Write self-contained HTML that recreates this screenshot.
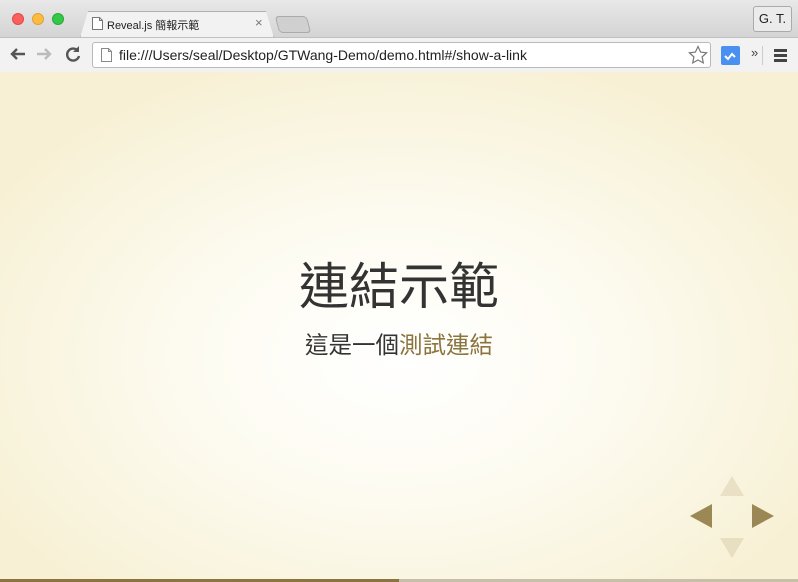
<!DOCTYPE html>
<html><head><meta charset="utf-8"><style>
*{margin:0;padding:0;box-sizing:border-box}
body{width:798px;height:582px;overflow:hidden;font-family:"Liberation Sans","Noto Sans CJK TC",sans-serif;position:relative;background:#fff}
.top{position:absolute;left:0;top:0;width:798px;height:72px;background:linear-gradient(#ececec,#dcdcdc);border-bottom:1px solid #b5b5b5}
.tabbar{position:absolute;top:0;left:0;width:798px;height:37px;background:linear-gradient(#e8e8e8,#d4d4d4)}
.dot{position:absolute;top:13px;width:12px;height:12px;border-radius:50%}
.tab{position:absolute;left:80px;top:11px;width:194px;height:27px;background:#f2f2f2;border:1px solid #b0b0b0;border-bottom:none;border-radius:5px 5px 0 0;clip-path:polygon(0 100%,8px 0,calc(100% - 8px) 0,100% 100%)}
.toolbar{position:absolute;top:37px;left:0;width:798px;height:35px;background:#f2f2f2;border-top:1px solid #c0c0c0}
.url{position:absolute;left:92px;top:4px;width:619px;height:26px;background:#fff;border:1px solid #b9b9b9;border-radius:3px;font-size:14px;color:#222;padding:4px 0 0 26px}
.slide{position:absolute;top:72px;left:0;width:798px;height:510px;background:radial-gradient(ellipse 60% 62% at 50% 56%,#fff 0%,#fdfbf0 45%,#f7f0d4 100%)}
h1{position:absolute;top:175px;width:100%;text-align:center;font-weight:400;font-size:50px;color:#333;font-family:"Liberation Sans","Noto Sans CJK TC",sans-serif}
p{position:absolute;top:254px;width:100%;text-align:center;font-size:23.5px;color:#333}
p span{color:#8b743d}
.bar{position:absolute;left:0;bottom:0;height:3px;width:798px;background:#c8bfa8}
.bar i{display:block;height:3px;width:399px;background:#8b743d}
</style></head><body>
<div class="top">
<div class="tabbar">
<div class="dot" style="left:12px;background:#fc605c;border:1px solid #de4a45"></div>
<div class="dot" style="left:32px;background:#fdbc40;border:1px solid #dea236"></div>
<div class="dot" style="left:52px;background:#34c84a;border:1px solid #27aa35"></div>
<div class="tab"></div>
<svg style="position:absolute;left:92px;top:17px" width="11" height="13"><path d="M.5.5h7l3 3v9H.5z M7.5.5v3h3" fill="#fff" stroke="#777"/></svg>
<div style="position:absolute;left:107px;top:17px;font-size:11px;color:#222">Reveal.js 簡報示範</div>
<div style="position:absolute;left:255px;top:15px;font-size:13px;color:#777">×</div>
<div style="position:absolute;left:277px;top:16px;width:32px;height:17px;background:#d0d0d0;border:1px solid #aaa;border-radius:4px;transform:skewX(15deg)"></div>
<div style="position:absolute;left:753px;top:6px;width:39px;height:26px;border:1px solid #aaa;border-radius:3px;background:#ebebeb;font-size:13px;text-align:center;line-height:24px;color:#222">G. T.</div>
</div>
<div class="toolbar">
<svg style="position:absolute;left:9px;top:8px" width="18" height="16"><path d="M16 8H3M8 3L3 8l5 5" stroke="#555" stroke-width="2.4" fill="none"/></svg>
<svg style="position:absolute;left:35px;top:8px" width="18" height="16"><path d="M2 8h13M10 3l5 5-5 5" stroke="#bbb" stroke-width="2.4" fill="none"/></svg>
<svg style="position:absolute;left:64px;top:7px" width="18" height="18"><path d="M14 6A6 6 0 1 0 15 11" stroke="#555" stroke-width="2.4" fill="none"/><path d="M15 1v6H9z" fill="#555"/></svg>
<div class="url">file:///Users/seal/Desktop/GTWang-Demo/demo.html#/show-a-link
<svg style="position:absolute;left:8px;top:5px" width="11" height="14"><path d="M.5.5h7l3 3v10H.5z M7.5.5v3h3" fill="#fff" stroke="#888"/></svg>
<svg style="position:absolute;right:2px;top:2px" width="20" height="20"><path d="M10 1.5l2.6 5.6 6 .7-4.5 4.1 1.2 6L10 15l-5.3 2.9 1.2-6L1.4 7.8l6-.7z" fill="none" stroke="#777" stroke-width="1.2"/></svg>
</div>
<div style="position:absolute;left:721px;top:8px;width:19px;height:19px;background:#4a90f0;border-radius:2px"><svg width="19" height="19"><path d="M4 10l3 3 4-5 3 3" stroke="#fff" stroke-width="2" fill="none"/></svg></div>
<div style="position:absolute;left:751px;top:7px;font-size:13px;color:#444">»</div>
<div style="position:absolute;left:762px;top:8px;width:1px;height:19px;background:#ccc"></div>
<div style="position:absolute;left:774px;top:11px;width:13px;height:3px;background:#444;box-shadow:0 5px #444,0 10px #444"></div>
</div>
</div>
<div class="slide">
<h1>連結示範</h1>
<p>這是一個<span>測試連結</span></p>
<svg style="position:absolute;left:689px;top:402px" width="86" height="86">
<path d="M31 22l12-20 12 20z" fill="#8b743d" opacity=".15"/>
<path d="M31 64l12 20 12-20z" fill="#8b743d" opacity=".15"/>
<path d="M23 30L1 42l22 12z" fill="#8b743d" opacity=".85"/>
<path d="M63 30l22 12-22 12z" fill="#8b743d" opacity=".85"/>
</svg>
<div class="bar"><i></i></div>
</div>
</body></html>
